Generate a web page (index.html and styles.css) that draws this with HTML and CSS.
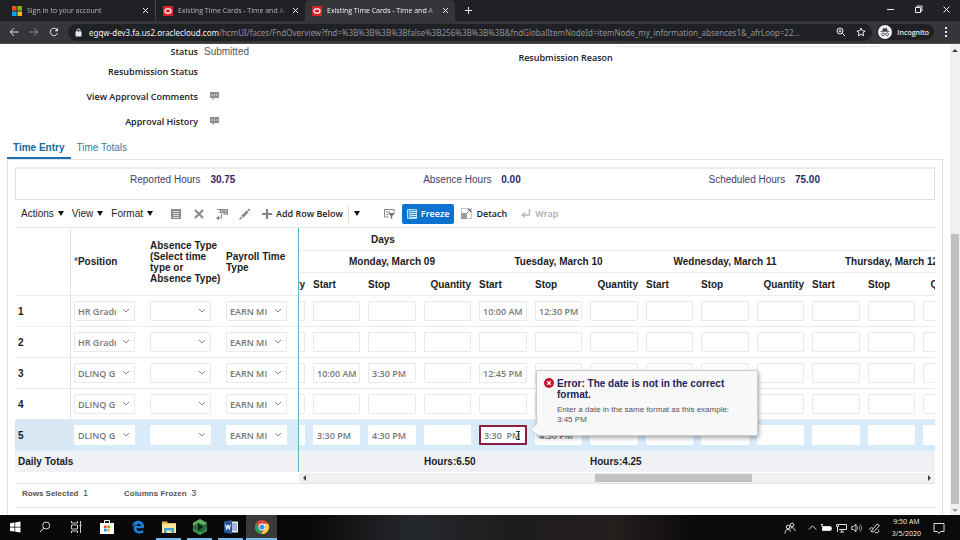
FILE: index.html
```
<!DOCTYPE html>
<html lang="en">
<head>
	<meta charset="utf-8">
	<meta name="viewport" content="width=device-width">
	<title>Existing Time Cards - Time and Absences</title>
	<link rel="stylesheet" href="styles.css">
</head>
<body>
	<header class="browser">
		<div class="tabstrip">
			<div class="tab">
				<svg class="favicon" viewBox="0 0 11 11"><path fill="#f25022" d="M0 0h5v5H0z"/><path fill="#7fba00" d="M6 0h5v5H6z"/><path fill="#00a4ef" d="M0 6h5v5H0z"/><path fill="#ffb900" d="M6 6h5v5H6z"/></svg>
				<span class="tab-title">Sign in to your account</span>
				<button class="tab-close" aria-label="Close tab"><svg width="7" height="7" viewBox="0 0 7 7"><path d="M1 1l5 5M6 1L1 6"/></svg></button>
			</div>
			<div class="tab divided">
				<svg class="favicon" viewBox="0 0 11 11"><rect width="11" height="11" rx="1" fill="#d8232a"/><rect x="2.2" y="3.2" width="6.6" height="4.6" rx="2.3" fill="none" stroke="#fff" stroke-width="1.4"/></svg>
				<span class="tab-title">Existing Time Cards - Time and A</span>
				<button class="tab-close" aria-label="Close tab"><svg width="7" height="7" viewBox="0 0 7 7"><path d="M1 1l5 5M6 1L1 6"/></svg></button>
			</div>
			<div class="tab active">
				<svg class="favicon" viewBox="0 0 11 11"><rect width="11" height="11" rx="1" fill="#d8232a"/><rect x="2.2" y="3.2" width="6.6" height="4.6" rx="2.3" fill="none" stroke="#fff" stroke-width="1.4"/></svg>
				<span class="tab-title">Existing Time Cards - Time and A</span>
				<button class="tab-close" aria-label="Close tab"><svg width="7" height="7" viewBox="0 0 7 7"><path d="M1 1l5 5M6 1L1 6"/></svg></button>
			</div>
			<button class="new-tab" aria-label="New tab"><svg width="9" height="9" viewBox="0 0 9 9"><path d="M4.5 1v7M1 4.5h7"/></svg></button>
			<div class="window-controls">
				<button aria-label="Minimize"><svg width="9" height="9" viewBox="0 0 9 9"><path d="M1 4.5h7"/></svg></button>
				<button aria-label="Restore"><svg width="9" height="9" viewBox="0 0 9 9"><path d="M1.5 2.5h5v5h-5zM3 2.5V1h5v5H6.5"/></svg></button>
				<button aria-label="Close"><svg width="9" height="9" viewBox="0 0 9 9"><path d="M1.5 1.5l6 6M7.5 1.5l-6 6"/></svg></button>
			</div>
		</div>
		<div class="navbar">
			<button class="nav" aria-label="Back"><svg width="10" height="10" viewBox="0 0 10 10"><path d="M9.5 5H1.5M5 1.2L1.2 5 5 8.8"/></svg></button>
			<button class="nav dim" aria-label="Forward"><svg width="10" height="10" viewBox="0 0 10 10"><path d="M.5 5h8M5 1.2L8.8 5 5 8.8"/></svg></button>
			<button class="nav" aria-label="Reload"><svg width="10" height="10" viewBox="0 0 10 10"><path d="M8.5 6.2A3.7 3.7 0 1 1 7.8 2.5"/><path d="M9 .8v3.4H5.6z" fill="#e8eaed" stroke="none"/></svg></button>
			<div class="omnibox">
				<svg width="7" height="9" viewBox="0 0 7 9"><rect x=".5" y="3.5" width="6" height="5" rx=".6" fill="#e8eaed"/><path d="M2 4V2.4a1.5 1.5 0 0 1 3 0V4" fill="none" stroke="#e8eaed"/></svg>
				<span class="url"><b>egqw-dev3.fa.us2.oraclecloud.com</b>/hcmUI/faces/FndOverview?fnd=%3B%3B%3B%3Bfalse%3B256%3B%3B%3B&amp;fndGlobalItemNodeId=itemNode_my_information_absences1&amp;_afrLoop=22...</span>
				<button aria-label="Zoom"><svg width="10" height="10" viewBox="0 0 10 10"><circle cx="4" cy="4" r="3"/><path d="M6.3 6.3L9.2 9.2M2.5 4h3M4 2.5v3"/></svg></button>
				<button aria-label="Bookmark"><svg width="10" height="10" viewBox="0 0 10 10"><path d="M5 1l1.2 2.7 2.9.3-2.2 1.9.7 2.9L5 7.3 2.4 8.8l.7-2.9L.9 4l2.9-.3z"/></svg></button>
			</div>
			<div class="incognito">
				<svg width="14" height="14" viewBox="0 0 14 14"><circle cx="7" cy="7" r="7" fill="#f1f3f4"/><path d="M4.3 6l.8-3 1.9.4L8.9 3l.8 3zM2.5 6.3h9v.8h-9z" fill="#3c4043"/><g fill="none" stroke="#3c4043" stroke-width=".8"><circle cx="4.9" cy="9.3" r="1.4"/><circle cx="9.1" cy="9.3" r="1.4"/><path d="M6.3 9h1.4"/></g></svg>
				<span>Incognito</span>
			</div>
			<button class="nav more" aria-label="Menu"><svg width="4" height="10" viewBox="0 0 4 10"><path fill="#e8eaed" stroke="none" d="M1 0h2v2H1zM1 4h2v2H1zM1 8h2v2H1z"/></svg></button>
		</div>
	</header>

	<div class="viewport">
		<main class="page">
			<section class="details">
				<dl class="fields">
					<dt>Status</dt><dd>Submitted</dd>
					<dt>Resubmission Status</dt><dd></dd>
					<dt>View Approval Comments</dt>
					<dd><button aria-label="View approval comments"><svg width="9" height="9" viewBox="0 0 9 9"><path fill="#8d9092" d="M0 0h9v6H4.5L2.5 8.5V6H0z"/><path stroke="#e4e4e4" stroke-dasharray="1.5 .7" d="M1.5 3h6"/></svg></button></dd>
					<dt>Approval History</dt>
					<dd><button aria-label="Approval history"><svg width="9" height="9" viewBox="0 0 9 9"><path fill="#8d9092" d="M0 0h9v6H4.5L2.5 8.5V6H0z"/><path stroke="#e4e4e4" stroke-dasharray="1.5 .7" d="M1.5 3h6"/></svg></button></dd>
				</dl>
				<div class="reason">
					<span>Resubmission Reason</span>
					<div class="reason-box"></div>
				</div>
			</section>

			<nav class="page-tabs">
				<a class="current" href="#entry">Time Entry</a>
				<a href="#totals">Time Totals</a>
			</nav>

			<section class="panel" id="entry">
				<div class="summary">
					<div>Reported Hours <b>30.75</b></div>
					<div>Absence Hours <b>0.00</b></div>
					<div>Scheduled Hours <b>75.00</b></div>
				</div>

				<div class="toolbar">
					<button class="menu">Actions<i class="caret"></i></button>
					<button class="menu">View<i class="caret"></i></button>
					<button class="menu">Format<i class="caret"></i></button>
					<div class="icons">
						<button aria-label="Add row"><svg width="12" height="12" viewBox="0 0 12 12"><path fill="#8b8b8b" d="M1 1h10v10H1z"/><path stroke="#fff" d="M3 3.5h6M3 5.5h6M3 7.5h6M3 9.5h6" stroke-width=".7"/></svg></button>
						<button aria-label="Delete row"><svg width="12" height="12" viewBox="0 0 12 12"><path stroke="#8b8b8b" stroke-width="2.2" d="M2 2l8 8M10 2l-8 8"/></svg></button>
						<button aria-label="Duplicate row"><svg width="12" height="12" viewBox="0 0 12 12"><path fill="#bbb" d="M4 1h7v6H8V5H4z"/><path fill="none" stroke="#888" d="M1 1.5h10.5V7M4.5 1.5v3M8 1.5v5M3 4.5h8M5.5 6v4H1.5"/><path fill="#888" d="M0 10l3-2.5v5z"/></svg></button>
						<button aria-label="Edit"><svg width="12" height="12" viewBox="0 0 12 12"><path fill="#8b8b8b" d="M0 12l1.5-3.5 2 2zM2.2 7.8l5.5-5.5 2 2-5.5 5.5zM8.4 1.6L9.8.4l1.8 1.8-1.2 1.4z"/></svg></button>
					</div>
					<button class="text-btn"><svg width="10" height="10" viewBox="0 0 10 10"><path stroke="#858585" stroke-width="2.2" d="M5 0v10M0 5h10"/></svg>Add Row Below</button>
					<button class="split" aria-label="More add options"><i class="caret"></i></button>
					<button class="filter" aria-label="Query by example"><svg width="12" height="12" viewBox="0 0 12 12"><path fill="none" stroke="#888" d="M1 1.5h10v3M1.5 1v8h4M3 4h4M3 6.5h2"/><path fill="#777" d="M5 5h7L9.2 8v3.5L7.7 10V8z"/></svg></button>
					<button class="text-btn freeze"><svg width="10" height="10" viewBox="0 0 10 10"><path fill="#2f8fe0" stroke="#b9dcf8" d="M.5.5h9v9h-9z"/><path stroke="#d8ecfb" d="M3 1v8M4 2.5h5M4 4.5h5M4 6.5h5M4 8.5h5"/></svg>Freeze</button>
					<button class="text-btn"><svg width="11" height="11" viewBox="0 0 11 11"><path fill="none" stroke="#aaa" stroke-dasharray="2 1" d="M.5.5h10v10H.5z"/><path fill="#999" d="M0 5h6v6H0z"/><path fill="none" stroke="#777" d="M6 5l3-3M6.5 1.5h3v3"/></svg>Detach</button>
					<button class="text-btn" disabled><svg width="10" height="10" viewBox="0 0 10 10"><path fill="none" stroke="#bbb" stroke-width="1.5" d="M8.5 0v6H2"/><path fill="#bbb" d="M0 6l4-3v6z"/></svg>Wrap</button>
				</div>

				<div class="grid">
					<table class="frozen">
						<thead>
							<tr>
								<th class="num" aria-label="Row"></th>
								<th><span class="req">*</span>Position</th>
								<th>Absence Type (Select time type or Absence Type)</th>
								<th>Payroll Time Type</th>
							</tr>
						</thead>
						<tbody id="frozenRows"></tbody>
						<tfoot>
							<tr><th colspan="4">Daily Totals</th></tr>
						</tfoot>
					</table>
					<div class="scroller">
						<table class="days">
							<colgroup id="dayCols"></colgroup>
							<thead>
								<tr><th class="days-title" colspan="13">Days</th></tr>
								<tr class="dates"><th></th><th colspan="3">Monday, March 09</th><th colspan="3">Tuesday, March 10</th><th colspan="3">Wednesday, March 11</th><th colspan="3">Thursday, March 12</th></tr>
								<tr id="dayLabels"></tr>
							</thead>
							<tbody id="dayRows"></tbody>
							<tfoot>
								<tr><td colspan="3"></td><td>Hours:6.50</td><td colspan="2"></td><td>Hours:4.25</td><td colspan="6"></td></tr>
							</tfoot>
						</table>
						<div class="hscroll"><i class="left"></i><i class="thumb"></i><i class="right"></i></div>
					</div>
				</div>

				<div class="status-line">
					<span><b>Rows Selected</b> 1</span>
					<span><b>Columns Frozen</b> 3</span>
				</div>
			</section>
		</main>
		<div class="vscroll"><i class="up"></i><i class="thumb"></i><i class="down"></i></div>
	</div>

	<footer class="taskbar">
		<button class="start" aria-label="Start"><svg width="12" height="12" viewBox="0 0 12 12"><path fill="#fff" d="M1 2.2l4.5-.7v4.2H1zM6.2 1.4L11.5.6v5.1H6.2zM1 6.4h4.5v4.2L1 9.9zM6.2 6.4h5.3v5.1l-5.3-.8z"/></svg></button>
		<button aria-label="Search"><svg width="12" height="12" viewBox="0 0 12 12"><g fill="none" stroke="#ddd"><circle cx="7.2" cy="4.5" r="3.5"/><path d="M4.7 7L1 11"/></g></svg></button>
		<button aria-label="Task view"><svg width="12" height="12" viewBox="0 0 12 12"><path fill="none" stroke="#ccc" d="M1.5 0v2h6V0M1.5 4h6v4h-6zM1.5 12v-2h6v2M10.5 0v12M9.5 4.5h2"/></svg></button>
		<button aria-label="Store"><svg width="16" height="16" viewBox="0 0 16 16"><path fill="none" stroke="#fff" d="M5.5 5V1.5h5V5"/><path fill="#fff" d="M1 4h14v11H1z"/><path fill="#f25022" d="M5 6.5h2.7v2.7H5z"/><path fill="#7fba00" d="M8.3 6.5H11v2.7H8.3z"/><path fill="#00a4ef" d="M5 9.8h2.7v2.7H5z"/><path fill="#ffb900" d="M8.3 9.8H11v2.7H8.3z"/></svg></button>
		<button aria-label="Edge"><svg width="14" height="14" viewBox="0 0 14 14"><path fill="#1682dc" d="M1 7C1.3 3 3.8.8 7.2.8c3.7 0 5.9 2.6 5.9 6.2v1.3H5.3c.2 2 1.7 2.8 3.5 2.8 1.3 0 2.5-.4 3.5-1v2.6c-1.2.6-2.6.8-4 .8C4.8 13.500 2.6 11.6 2.6 8.6c0-1.9 1-3.5 2.5-4.4C3.3 4.5 1.8 5.5 1 7zm4.4-.9h4.4c0-1.4-.7-2.3-2.1-2.3-1.3 0-2.1 1-2.3 2.3z"/></svg></button>
		<button class="open" aria-label="File Explorer"><svg width="14" height="14" viewBox="0 0 14 14"><path fill="#e8b846" d="M0 1.5h5l1 1.500h8v10H0z"/><path fill="#fce79a" d="M0 4h14v9H0z"/><path fill="#48a5d9" d="M2 8h10v5H9.5v-2.5h-5V13H2z"/></svg></button>
		<button class="open" aria-label="Camtasia"><svg width="16" height="16" viewBox="0 0 16 16"><path fill="#2b6b3a" d="M8 0l7 4v8l-7 4-7-4V4z"/><path fill="#62b366" d="M8 0l7 4-3.5 2L6 3.5 1 7V4z"/><path fill="#3f9350" d="M1 9l5 4h5l4-4v3l-7 4-7-4z"/><path fill="#0e2316" d="M6 4.5L11.5 8 6 11.5z"/></svg></button>
		<button class="open" aria-label="Word"><svg width="14" height="14" viewBox="0 0 14 14"><path fill="#e8eef8" d="M6 1.5h8v11H6z"/><path stroke="#5f83c0" d="M8 4h5M8 6h5M8 8h5M8 10h5"/><path fill="#2b579a" d="M0 1.5L8 0v14l-8-1.5z"/><path fill="none" stroke="#fff" d="M1.7 4.5l1 5L4 5l1.3 4.5 1-5"/></svg></button>
		<button class="open focused" aria-label="Chrome"><svg width="16" height="16" viewBox="0 0 16 16"><circle cx="8" cy="8" r="7" fill="#dd4b3e"/><path fill="#1ea362" d="M2 4.4L5.2 9.9 8 11.5 7.3 15A7 7 0 0 1 2 4.4z"/><path fill="#ffcd46" d="M8 4.7h6.2A7 7 0 0 1 7.3 15l3.5-5.5z"/><circle cx="8" cy="8" r="3.4" fill="#fff"/><circle cx="8" cy="8" r="2.6" fill="#4b8bf4"/></svg></button>
		<div class="tray">
			<svg width="12" height="12" viewBox="0 0 12 12"><circle cx="4" cy="5" r="1.8"/><path d="M1 11.5C1 9 2 7.5 4 7.5s2.5 1 2.5 2"/><circle cx="8" cy="3" r="1.8"/><path d="M6 6.5c1.5-1.5 5-1 5 2.5"/></svg>
			<svg class="chevron" width="9" height="9" viewBox="0 0 9 9"><path d="M.8 6.5l3.7-3.7 3.7 3.7"/></svg>
			<svg width="11" height="10" viewBox="0 0 11 10"><path fill="#fff" d="M1.5 3.5h8v4h-8zM0 1.5h2M0 3h2M9.5 4.5h1v2h-1z"/></svg>
			<svg width="11" height="10" viewBox="0 0 11 10"><path d="M3 1.5h7.5v5H3M4 9h4M6 6.5V9M.5 1.5h2v2h-2zM1.5 4v5"/></svg>
			<svg width="11" height="10" viewBox="0 0 11 10"><path d="M.8 3.5h1.7L5 1.2v7.6L2.5 6.5H.8z"/><path opacity=".6" d="M6.5 3.5v3M8 2.5c1 1.5 1 3.5 0 5M9.5 1.5c1.5 2 1.5 5 0 7"/></svg>
			<svg class="pen" width="12" height="12" viewBox="0 0 12 12"><path d="M2 9.5L8 2l2.5 1.5L4.5 10zM1 8c-1-2 2-3 3-1.5M6 10.5c3 1 5-1 3-3"/></svg>
			<div class="clock"><time>9:50 AM</time><span>3/5/2020</span></div>
			<svg width="12" height="12" viewBox="0 0 12 12"><path d="M1 1.5h10v8H7.5l-1.5 2-1.5-2H1z"/></svg>
		</div>
	</footer>

	<script>
		let rows = [
			{position: 'HR Gradu', days: {4: '10:00 AM', 5: '12:30 PM'}},
			{position: 'HR Gradu', days: {}},
			{position: 'DLINQ G', days: {1: '10:00 AM', 2: '3:30 PM', 4: '12:45 PM'}},
			{position: 'DLINQ G', days: {}},
			{position: 'DLINQ G', days: {1: '3:30 PM', 2: '4:30 PM', 4: '3:30  PM', 5: '4:30 PM'}, selected: true, error: 4}
		];
		// first column is the tail of Sunday
		let labels = ['Quantity'];
		for (let d = 0; d < 4; d++) labels.push('Start', 'Stop', 'Quantity');

		let tooltip = '<div class="tooltip" role="alert">' +
			'<svg class="tail" width="9" height="14" viewBox="0 0 9 14"><path fill="#f8f8f8" stroke="#ccc" d="M9 1L1 8l8 5"/></svg>' +
			'<svg class="error-icon" width="10" height="10" viewBox="0 0 10 10"><circle cx="5" cy="5" r="5" fill="#c8102e"/><path stroke="#fff" stroke-width="1.3" d="M3.2 3.2l3.6 3.6M6.8 3.2L3.2 6.8"/></svg>' +
			'<div><strong>Error: The date is not in the correct format.</strong>' +
			'<p>Enter a date in the same format as this example: 3:45 PM</p></div></div>';
		let ibeam = '<svg class="ibeam" width="5" height="9" viewBox="0 0 5 9"><path fill="none" stroke="#333" d="M0 .5h4M0 8.5h4M2.5.5v8"/></svg>';

		function select(name, value, row) {
			return '<td><select aria-label="' + name + ' ' + row + '"><option>' + value + '</option></select></td>';
		}

		function dayCell(row, label, col, n) {
			let bad = row.error === col;
			return '<td><input type="text" aria-label="' + label + ' ' + n + '" value="' + (row.days[col] || '') + '"' +
				(bad ? ' class="invalid" aria-invalid="true"' : '') + '>' + (bad ? ibeam + tooltip : '') + '</td>';
		}

		document.querySelector('#dayCols').innerHTML = labels.map(() => '<col>').join('');
		document.querySelector('#dayLabels').innerHTML = labels.map(l => '<th class="' + l.toLowerCase() + '">' + l + '</th>').join('');
		document.querySelector('#frozenRows').innerHTML = rows.map((r, i) =>
			'<tr' + (r.selected ? ' class="selected"' : '') + '><th class="num">' + (i + 1) + '</th>' +
			select('Position', r.position, i + 1) + select('Absence Type', '', i + 1) + select('Payroll Time Type', 'EARN MI', i + 1) + '</tr>').join('');
		document.querySelector('#dayRows').innerHTML = rows.map((r, i) =>
			'<tr' + (r.selected ? ' class="selected"' : '') + '>' + labels.map((l, c) => dayCell(r, l, c, i + 1)).join('') + '</tr>').join('');
	</script>
</body>
</html>
```
FILE: styles.css
```
* {
	box-sizing: border-box;
}

body {
	background: #fff;
	color: #222;
	display: flex;
	flex-direction: column;
	font-family: "Liberation Sans", Arial, sans-serif;
	font-size: 10px;
	height: 100vh;
	line-height: 11px;
	margin: 0;
	overflow: hidden;
}

button {
	align-items: center;
	background: none;
	border: 0;
	color: inherit;
	display: flex;
	font: inherit;
	justify-content: center;
	padding: 0;
	white-space: nowrap;
}
svg {
	display: block;
	flex: none;
}

/* browser chrome */
.browser {
	background: #202124;
	border-bottom: 1px solid #4a4b4e;
	color: #e8eaed;
	font-family: "Open Sans", sans-serif;
	font-size: 7px;
}
.browser button svg {
	fill: none;
	stroke: #e8eaed;
}
.tabstrip {
	display: flex;
	height: 21px;
	padding-left: 5px;
}
.tab {
	align-items: center;
	color: #b4b6ba;
	display: flex;
	gap: 5px;
	padding: 0 6px 0 7px;
	width: 150px;
}
.tab.divided {
	border-left: 1px solid #46474a;
}
.tab.active {
	background: #35363a;
	border-radius: 5px 5px 0 0;
	color: #f1f3f4;
}
.favicon {
	height: 10px;
	width: 10px;
}
.tab-title {
	flex: 1;
	-webkit-mask-image: linear-gradient(to right, #000 90%, transparent);
	mask-image: linear-gradient(to right, #000 90%, transparent);
	overflow: hidden;
	white-space: nowrap;
}
.new-tab {
	width: 26px;
}
.window-controls {
	display: flex;
	margin-left: auto;
	padding-bottom: 3px;
}
.window-controls button {
	width: 28px;
}

.navbar {
	align-items: center;
	background: #35363a;
	display: flex;
	height: 22px;
	padding: 0 6px 0 4px;
}
.nav {
	width: 20px;
}
.nav.dim {
	opacity: 0.5;
}
.nav.more {
	margin-left: 4px;
	width: 16px;
}
.omnibox {
	align-items: center;
	background: #202124;
	border-radius: 9px;
	display: flex;
	flex: 1;
	gap: 10px;
	height: 17px;
	margin: 0 5px 0 4px;
	min-width: 0;
	padding: 0 6px 0 7px;
}
.url {
	color: #8f9296;
	flex: 1;
	font-family: "Noto Sans", sans-serif;
	font-size: 8px;
	margin-left: -3px;
	overflow: hidden;
	white-space: nowrap;
}
.url b {
	color: #f1f3f4;
	font-weight: normal;
}
.incognito {
	align-items: center;
	background: #202124;
	border-radius: 8px;
	display: flex;
	font-weight: 600;
	gap: 5px;
	height: 16px;
	padding: 0 5px 0 1px;
}

/* page */
.viewport {
	display: flex;
	flex: 1;
	min-height: 0;
}
.page {
	display: flex;
	flex: 1;
	flex-direction: column;
	min-width: 0;
	overflow: hidden;
	padding: 0 7px;
}
.details {
	display: grid;
	font-family: "Open Sans", sans-serif;
	font-size: 9px;
	font-weight: 600;
	grid-template-columns: 54% 46%;
}
.fields {
	display: grid;
	grid-template-columns: 191px 1fr;
	grid-template-rows: 15px 25px 25px 25px;
	align-items: center;
	margin: 0;
	column-gap: 6px;
}
.fields dt {
	text-align: right;
}
.fields dd {
	color: #555;
	font-family: "Liberation Sans", Arial, sans-serif;
	font-size: 10px;
	font-weight: normal;
	margin: 0;
}
.fields dd button {
	margin-left: 6px;
}
.reason {
	align-items: flex-start;
	display: flex;
	gap: 4px;
	padding: 2px 62px 0 6px;
}
.reason span {
	margin-top: 6px;
}
.reason-box {
	border-bottom: 1px solid #e8e8e8;
	flex: 1;
	height: 1px;
}

.page-tabs {
	display: flex;
	font-size: 10px;
	height: 25px;
}
.page-tabs a {
	border-bottom: 2px solid transparent;
	color: #3c7aa0;
	padding: 8px 6px 0;
	text-decoration: none;
}
.page-tabs a.current {
	border-color: #1b6fb8;
	color: #176a9c;
	font-weight: bold;
}

.panel {
	border: 1px solid #e3e3e3;
	border-bottom: 0;
	flex: 1;
	padding: 7px 7px 0;
}
.summary {
	border: 1px solid #ddd;
	border-top: 2px solid #ececec;
	color: #3f4069;
	display: flex;
	height: 33px;
	justify-content: space-between;
	padding: 5px 114px 0;
}
.summary b {
	color: #2b2b66;
	margin-left: 7px;
}

.toolbar {
	align-items: center;
	border-bottom: 1px solid #e8e8e8;
	display: flex;
	height: 28px;
	padding-left: 6px;
}
.menu {
	gap: 4px;
	margin-right: 8px;
}
.caret {
	border: 3px solid transparent;
	border-bottom: 0;
	border-top: 5px solid #111;
}
.icons {
	display: flex;
	gap: 11px;
	margin: 0 11px 0 9px;
}
.text-btn {
	font-family: "Open Sans", sans-serif;
	font-size: 9px;
	font-weight: 600;
	gap: 4px;
	height: 20px;
	padding: 0 7px 0 0;
}
.text-btn:disabled {
	color: #aaa;
	margin-left: 7px;
}
.split {
	border-left: 1px solid #ddd;
	height: 18px;
	margin-left: -2px;
	width: 18px;
}
.filter {
	margin: 0 7px 0 17px;
}
.freeze {
	background: #0b72cf;
	border-radius: 2px;
	color: #fff;
	margin-right: 7px;
	padding: 0 5px;
}

/* time card grid */
.grid {
	border-bottom: 1px solid #e3e3e3;
	display: flex;
}
table {
	border-collapse: separate;
	border-spacing: 0;
	table-layout: fixed;
}
th, td {
	border-bottom: 1px solid #ececec;
	color: #1c1c1c;
	font-size: 10px;
	padding: 0 4px;
	text-align: left;
	vertical-align: middle;
}
.frozen {
	align-self: flex-start;
	border-right: 1px solid #58b8c4;
	flex: none;
	width: 284px;
}
.frozen th, .frozen td {
	padding-left: 3px;
}
.frozen thead th {
	height: 68px;
	width: 76px;
}
.frozen thead th:nth-child(3) {
	padding-right: 0;
}
.frozen thead th:last-child {
	width: auto;
}
.frozen thead th.num {
	width: 56px;
}
.frozen .num {
	border-right: 1px solid #e3e3e3;
}
.req {
	color: #2779b5;
}
tbody th, tbody td {
	height: 31px;
}
.selected th, .selected td {
	background: #d9ebf9;
	border-bottom-color: #d9ebf9;
}
.frozen .selected .num {
	background: #d9e6f3;
}
tfoot th, tfoot td {
	background: #f0f1f5;
	border: 0;
	font-weight: bold;
	height: 21px;
	white-space: nowrap;
}

select, input {
	appearance: none;
	background: #fff;
	border: 1px solid #e9e9e9;
	border-radius: 1px;
	color: #777;
	display: block;
	font-family: "Open Sans", sans-serif;
	font-size: 9px;
	font-weight: 600;
	height: 20px;
	margin: 0;
	outline: 0;
	padding: 0 3px;
	width: 100%;
}
select {
	background: #fff url("data:image/svg+xml,%3Csvg xmlns='http://www.w3.org/2000/svg' width='8' height='6'%3E%3Cpath fill='none' stroke='%23888' d='M1 1l3 3 3-3'/%3E%3C/svg%3E") no-repeat right 4px center;
	padding-right: 18px;
	width: 61px;
}
.selected select, .selected input {
	border-color: #fff;
}
.selected .invalid {
	border: 2px solid #8b1d41;
}

.scroller {
	flex: 1;
	min-width: 0;
	overflow: hidden;
}
/* scrolled so that Monday comes first */
.days {
	margin-left: -46px;
	width: 722px;
}
.days col {
	width: 55px;
}
.days col:nth-child(odd) {
	width: 56px;
}
.days thead th {
	height: 22px;
}
.days thead tr:first-child th, .days thead tr:last-child th {
	height: 23px;
}
.days .days-title {
	padding-left: 118px;
}
.days .dates th {
	padding: 0;
	text-align: center;
	white-space: nowrap;
}
.days .quantity {
	text-align: right;
}
.days td {
	position: relative;
}
.days tfoot td {
	position: static;
}

.hscroll {
	align-items: center;
	background: #f0f0f0;
	border-top: 1px solid #fff;
	display: flex;
	height: 11px;
	padding: 0 4px;
}
.hscroll .left, .hscroll .right {
	border: 3px solid transparent;
	border-left: 0;
	border-right: 3px solid #444;
}
.hscroll .right {
	border-left: 3px solid #444;
	border-right: 0;
	margin-left: auto;
}
.hscroll .thumb {
	background: #c1c1c1;
	height: 8px;
	margin-left: 46%;
	width: 25%;
}

.ibeam {
	position: absolute;
	right: 10px;
	top: 11px;
}
.tooltip {
	background: #f8f8f8;
	border: 1px solid #ccc;
	border-radius: 1px;
	bottom: 14px;
	box-shadow: 1px 2px 4px rgba(0, 0, 0, 0.35);
	color: #555;
	display: flex;
	font-size: 8px;
	gap: 3px;
	height: 66px;
	left: 61px;
	line-height: 10px;
	padding: 7px;
	position: absolute;
	width: 222px;
	z-index: 1;
}
.tooltip strong {
	color: #24245c;
	display: block;
	font-size: 10px;
	line-height: 11px;
}
.tooltip p {
	margin: 5px 0 0;
	padding-right: 14px;
}
.tail {
	bottom: -1px;
	left: -8px;
	position: absolute;
}

.status-line {
	align-items: center;
	border-bottom: 1px solid #e3e3e3;
	color: #444;
	display: flex;
	font-size: 9px;
	gap: 36px;
	height: 24px;
	padding: 0 7px 4px;
}
.status-line b {
	color: #555;
	font-size: 8px;
	margin-right: 2px;
}

.vscroll {
	align-items: center;
	background: #f0f0f0;
	display: flex;
	flex-direction: column;
	padding: 5px 0 3px;
	width: 10px;
}
.vscroll .up, .vscroll .down {
	border: 3px solid transparent;
	border-bottom: 3px solid #444;
	border-top: 0;
}
.vscroll .down {
	border-bottom: 0;
	border-top: 3px solid #999;
	margin-top: auto;
}
.vscroll .thumb {
	background: #c1c1c1;
	height: 270px;
	margin-top: 182px;
	width: 8px;
}

/* windows taskbar */
.taskbar {
	background: linear-gradient(to right, #080808 32%, #25282c 43%, #1e1c1d 53%, #241e1d 64%, #0c0b0b 72%);
	color: #f0f0f0;
	display: flex;
	font-family: "Open Sans", sans-serif;
	height: 25px;
}
.taskbar button {
	border-bottom: 2px solid transparent;
	width: 31px;
}
.taskbar .start {
	width: 29px;
}
.taskbar .open {
	background: linear-gradient(#76b9ed, #76b9ed) no-repeat center 23px / 25px 2px;
	background-clip: border-box;
	background-origin: border-box;
}
.taskbar .focused {
	background: #3a3a3a;
	border-color: #76b9ed;
}
.tray {
	align-items: center;
	display: flex;
	gap: 4px;
	margin-left: auto;
	padding-right: 15px;
}
.tray svg {
	fill: none;
	stroke: #ddd;
}
.chevron {
	margin-left: 8px;
}
.pen {
	margin-left: 3px;
}
.clock {
	font-size: 7px;
	line-height: 12px;
	margin: 0 8px 0 7px;
	text-align: center;
}
.clock time, .clock span {
	display: block;
}
```
